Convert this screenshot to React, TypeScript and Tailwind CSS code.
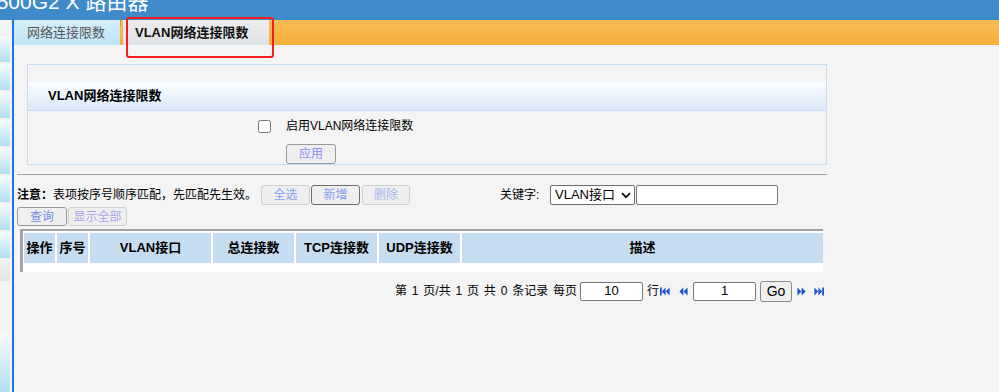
import { FC, ReactElement } from "react";

const font = "font-['Liberation_Sans','Noto_Sans_CJK_SC',sans-serif]";

const btn =
  "h-5 flex items-center justify-center border rounded-[3px] bg-[#efefef] text-[12px] leading-none";

const LeftStrip: FC = (): ReactElement => {
  const blocks = [16, 44, 72, 100, 128, 156, 184, 212];
  return (
    <div className="w-[12px] relative flex flex-col">
      <div className="flex flex-col gap-[2px] pt-[16px]">
        {blocks.map((b) => (
          <div key={b} className="w-[10px] h-[26px] bg-gradient-to-b from-[#f6fbfe] to-[#b3def2]" />
        ))}
      </div>
      <div className="w-[10px] h-[20px] mt-[3px] bg-gradient-to-b from-[#eef0f2] to-[#e2e4e6]" />
      <div className="w-[10px] h-[60px] mt-[52px] bg-gradient-to-b from-[#f6fbfe] to-[#b3def2]" />
    </div>
  );
};

const First: FC = () => (
  <svg width="10" height="9" viewBox="0 0 10 9">
    <rect x="0" y="0.5" width="1.8" height="8" fill="#1b55c9" />
    <path d="M5.6 0.5 L1.8 4.5 L5.6 8.5 Z M9.6 0.5 L5.8 4.5 L9.6 8.5 Z" fill="#1b55c9" />
  </svg>
);
const Prev: FC = () => (
  <svg width="9" height="9" viewBox="0 0 9 9">
    <path d="M4.4 0.5 L0.4 4.5 L4.4 8.5 Z M8.6 0.5 L4.6 4.5 L8.6 8.5 Z" fill="#1b55c9" />
  </svg>
);
const Next: FC = () => (
  <svg width="9" height="9" viewBox="0 0 9 9">
    <path d="M0.4 0.5 L4.4 4.5 L0.4 8.5 Z M4.6 0.5 L8.6 4.5 L4.6 8.5 Z" fill="#1b55c9" />
  </svg>
);
const Last: FC = () => (
  <svg width="10" height="9" viewBox="0 0 10 9">
    <path d="M0.4 0.5 L4.2 4.5 L0.4 8.5 Z M4.4 0.5 L8.2 4.5 L4.4 8.5 Z" fill="#1b55c9" />
    <rect x="8.2" y="0.5" width="1.8" height="8" fill="#1b55c9" />
  </svg>
);

export default function App(): ReactElement {
  const cols = [
    { name: "操作", w: "w-[31px]" },
    { name: "序号", w: "w-[31px]" },
    { name: "VLAN接口", w: "w-[121px]" },
    { name: "总连接数", w: "w-[81px]" },
    { name: "TCP连接数", w: "w-[81px]" },
    { name: "UDP连接数", w: "w-[81px]" },
    { name: "描述", w: "flex-1" },
  ];

  return (
    <div className={`w-[999px] h-[392px] overflow-hidden bg-[#f4f4f4] relative text-[12px] text-black ${font}`}>
      {/* top title bar */}
      <div className="h-5 bg-[#3f8bc9] overflow-hidden">
        <div className="-mt-[10px] -ml-[15px] text-white text-[21px] leading-[24px] whitespace-nowrap">
          6500G2 X 路由器
        </div>
      </div>

      <div className="flex h-[372px]">
        <LeftStrip />
        <div className="w-[2px] bg-[#1673f3]" />

        <main className="flex-1 flex flex-col">
          {/* tabs */}
          <div className="h-[25px] flex bg-gradient-to-b from-[#f9bb55] to-[#f6ae38]">
            <div className="w-[106px] flex items-center pl-[13px] text-[13px] text-[#555] bg-gradient-to-b from-[#d6eefa] to-[#bfe4f5]">
              网络连接限数
            </div>
            <div className="w-[1px] h-[6px] bg-[#e0952a]" />
            <div className="w-[146px] ml-[2px] flex items-center pl-[12px] text-[13px] font-bold text-[#111] bg-gradient-to-b from-[#eceded] to-[#dde1e5]">
              VLAN网络连接限数
            </div>
          </div>

          {/* settings panel */}
          <div className="ml-[13px] mt-[19px] w-[800px] h-[101px] border border-[#c6dcf0] flex flex-col">
            <div className="h-[18px]" />
            <div className="h-[30px] flex items-center pl-[20px] text-[13px] font-bold border-b border-[#c6dcf0] bg-gradient-to-b from-[#fbfdff] to-[#dae8f8]">
              VLAN网络连接限数
            </div>
            <div className="flex items-center pt-[6px] pl-[230px]">
              <input type="checkbox" className="m-0 w-[13px] h-[13px]" />
              <span className="ml-[15px]">启用VLAN网络连接限数</span>
            </div>
            <div className="ml-[258px] mt-[9px]">
              <div className={`${btn} w-[50px] border-[#999] text-[#8b8cf7]`}>应用</div>
            </div>
          </div>

          <div className="ml-[3px] mt-[9px] w-[810px] h-[1px] bg-[#a6a6a6]" />

          {/* toolbar */}
          <div className="ml-[3px] mt-[10px] flex items-center h-5">
            <span className="w-[244px] whitespace-nowrap">
              <b>注意：</b>表项按序号顺序匹配，先匹配先生效。
            </span>
            <div className={`${btn} w-[49px] border-[#cfcfcf] text-[#86a0ef]`}>全选</div>
            <div className={`${btn} w-[49px] ml-[1px] border-[#6f6f6f] text-[#86a0ef]`}>新增</div>
            <div className={`${btn} w-[48px] ml-[2px] border-[#cfcfcf] text-[#a9b6ef]`}>删除</div>
            <span className="ml-[90px] w-[50px]">关键字:</span>
            <div className="w-[85px] h-5 border border-[#6c6c6c] rounded-[2px] bg-white flex items-center pl-[4px] pr-[3px] justify-between text-[13px]">
              <span>VLAN接口</span>
              <svg width="10" height="7" viewBox="0 0 10 7">
                <path d="M1 1.2 L5 5.2 L9 1.2" stroke="#111" strokeWidth="1.8" fill="none" />
              </svg>
            </div>
            <div className="w-[142px] h-5 ml-[1px] border border-[#777] rounded-[2px] bg-white" />
          </div>

          <div className="ml-[3px] mt-[2px] flex h-[19px]">
            <div className={`${btn} h-[19px] w-[50px] border-[#9a9a9a] text-[#6f8fe6]`}>查询</div>
            <div className={`${btn} h-[19px] w-[59px] ml-[1px] border-[#d0d0d0] text-[#aaa7ec]`}>显示全部</div>
          </div>

          {/* table */}
          <div className="ml-[6px] mt-[3px] w-[803px] border-t-2 border-l-[3px] border-[#a3a3a3] bg-white pl-[1px] pt-[2px] pb-[9px]">
            <div className="flex gap-[2px] h-[30px]">
              {cols.map((c) => (
                <div key={c.name} className={`${c.w} bg-[#c6dcf0] flex items-center justify-center text-[13px] font-bold whitespace-nowrap`}>
                  {c.name}
                </div>
              ))}
            </div>
          </div>

          {/* pagination */}
          <div className="mt-[9px] ml-[381px] flex items-center h-5 whitespace-nowrap">
            <span className="[word-spacing:1.5px]">第 1 页/共 1 页 共 0 条记录 每页</span>
            <div className="ml-[3px] w-[63px] h-[19px] border border-[#767676] rounded-[2px] bg-white flex items-center justify-center text-[13px]">
              10
            </div>
            <span className="ml-[4px]">行</span>
            <span className="ml-[1px] flex"><First /></span>
            <span className="ml-[9px] flex"><Prev /></span>
            <div className="ml-[5px] w-[63px] h-[19px] border border-[#767676] rounded-[2px] bg-white flex items-center justify-center text-[13px]">
              1
            </div>
            <div className="ml-[4px] w-[32px] h-[21px] border border-[#8a8a8a] rounded-[3px] bg-[#efefef] flex items-center justify-center text-[14px]">
              Go
            </div>
            <span className="ml-[5px] flex"><Next /></span>
            <span className="ml-[8px] flex"><Last /></span>
          </div>
        </main>
      </div>

      {/* red annotation frame */}
      <div className="absolute left-[126px] top-[17px] w-[148px] h-[41px] border-2 border-[#f41c1c] rounded-[3px]" />
    </div>
  );
}
